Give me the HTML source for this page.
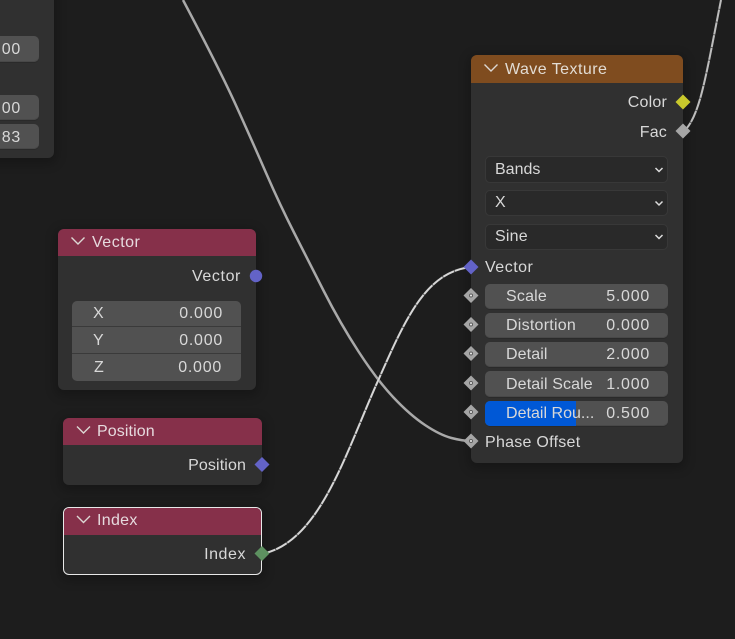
<!DOCTYPE html>
<html><head><meta charset="utf-8"><style>
html,body{margin:0;padding:0;background:#1d1d1d}
#c{position:relative;width:735px;height:639px;overflow:hidden;background:#1d1d1d;font-family:"Liberation Sans",sans-serif;font-size:16px;color:#d8d8d8;letter-spacing:.2px;filter:blur(.3px)}
.n{position:absolute;background:#303030;border-radius:6px;box-shadow:0 3px 10px 3px rgba(0,0,0,.22);box-sizing:border-box}
.h{position:absolute;left:0;top:0;right:0;border-radius:6px 6px 0 0}
.t{position:absolute;white-space:nowrap;line-height:20px;margin-top:2px}
.r{text-align:right}
.v{letter-spacing:.75px}
.f{position:absolute;box-sizing:border-box;border-radius:5px;background:#515151;box-shadow:inset 0 -1px 0 #484848,0 1px 0 #2a2a2a;overflow:hidden}
.d{position:absolute;box-sizing:border-box;border-radius:5px;background:#292929;border:1px solid #383838}
svg{position:absolute;left:0;top:0}
</style></head><body><div id="c">

<div class="n" style="left:-40px;top:-40px;width:94px;height:198px"></div>
<div class="f" style="left:-40px;top:36px;width:79px;height:26px"></div>
<div class="f" style="left:-40px;top:95px;width:79px;height:25px"></div>
<div class="f" style="left:-40px;top:124px;width:79px;height:25px"></div>
<div class="t v" style="left:0;top:38px;width:21px;text-align:right">00</div>
<div class="t v" style="left:0;top:97px;width:21px;text-align:right">00</div>
<div class="t v" style="left:0;top:126px;width:21px;text-align:right">83</div>

<svg width="735" height="639" style="z-index:1">
<path d="M183 0Q220 70 236.500 106.500Q253 143 266.500 174Q280 205 294 232.500Q308 260 324 291.500Q340 323 358.500 351.500Q377 380 393.500 397.500Q410 415 425 425Q440 435 451.500 438Q463 441 471 441" fill="none" stroke="#a9a9a9" stroke-width="2.500"/>
</svg>

<div class="n" style="left:471px;top:55px;width:212px;height:408px;z-index:2">
<div class="h" style="height:28px;background:#7f4c1f"></div></div>
<div style="position:absolute;left:0;top:0;z-index:3;width:735px;height:639px">
<div class="t" style="left:505px;top:58px;color:#e2dcd4;letter-spacing:.45px">Wave Texture</div>
<div class="t r" style="left:568px;width:99px;top:91px">Color</div>
<div class="t r" style="left:568px;width:99px;top:121px">Fac</div>

<div class="d" style="left:485px;top:156px;width:183px;height:27px"></div>
<div class="d" style="left:485px;top:190px;width:183px;height:26px"></div>
<div class="d" style="left:485px;top:224px;width:183px;height:26px"></div>
<div class="t" style="left:495px;top:158px;letter-spacing:0">Bands</div>
<div class="t" style="left:495px;top:191px">X</div>
<div class="t" style="left:495px;top:225px">Sine</div>

<div class="t" style="left:485px;top:256px;letter-spacing:.5px">Vector</div>

<div class="f" style="left:485px;top:284px;width:183px;height:25px"></div>
<div class="f" style="left:485px;top:313px;width:183px;height:25px"></div>
<div class="f" style="left:485px;top:342px;width:183px;height:25px"></div>
<div class="f" style="left:485px;top:371px;width:183px;height:26px"></div>
<div class="f" style="left:485px;top:401px;width:183px;height:25px"><div style="position:absolute;left:0;top:0;width:91px;height:25px;background:#0058d6"></div></div>

<div class="t" style="left:506px;top:285px">Scale</div><div class="t r v" style="left:590px;width:60px;top:285px">5.000</div>
<div class="t" style="left:506px;top:314px;letter-spacing:.25px">Distortion</div><div class="t r v" style="left:590px;width:60px;top:314px">0.000</div>
<div class="t" style="left:506px;top:343px;letter-spacing:.1px">Detail</div><div class="t r v" style="left:590px;width:60px;top:343px">2.000</div>
<div class="t" style="left:506px;top:373px;letter-spacing:.12px">Detail Scale</div><div class="t r v" style="left:590px;width:60px;top:373px">1.000</div>
<div class="t" style="left:506px;top:402px;letter-spacing:.02px">Detail Rou...</div><div class="t r v" style="left:590px;width:60px;top:402px">0.500</div>
<div class="t" style="left:485px;top:431px;letter-spacing:.27px">Phase Offset</div>
</div>

<div class="n" style="left:58px;top:229px;width:198px;height:161px;z-index:2">
<div class="h" style="height:27px;background:#86304a"></div></div>
<div style="position:absolute;left:0;top:0;z-index:3;width:735px;height:639px">
<div class="t" style="left:92px;top:231px;color:#e6dade;letter-spacing:.5px">Vector</div>
<div class="t r" style="left:141px;width:100px;top:265px;letter-spacing:.6px">Vector</div>
<div class="f" style="left:72px;top:301px;width:169px;height:80px;box-shadow:none"></div>
<div style="position:absolute;left:72px;top:326px;width:169px;height:1px;background:#3a3a3a"></div>
<div style="position:absolute;left:72px;top:353px;width:169px;height:1px;background:#3a3a3a"></div>
<div class="t" style="left:93px;top:302px">X</div><div class="t r v" style="left:163px;width:60px;top:302px">0.000</div>
<div class="t" style="left:93px;top:329px">Y</div><div class="t r v" style="left:163px;width:60px;top:329px">0.000</div>
<div class="t" style="left:94px;top:356px">Z</div><div class="t r v" style="left:162px;width:60px;top:356px">0.000</div>
</div>

<div class="n" style="left:63px;top:418px;width:199px;height:67px;z-index:2">
<div class="h" style="height:27px;background:#86304a"></div></div>
<div style="position:absolute;left:0;top:0;z-index:3;width:735px;height:639px">
<div class="t" style="left:97px;top:420px;color:#e6dade;letter-spacing:.1px">Position</div>
<div class="t r" style="left:126px;width:120px;top:454px;letter-spacing:.12px">Position</div>
</div>

<div class="n" style="left:63px;top:507px;width:199px;height:68px;z-index:2;border:1.5px solid #e8e8e8;overflow:hidden">
<div class="h" style="height:26.500px;background:#86304a;border-radius:0"></div></div>
<div style="position:absolute;left:0;top:0;z-index:3;width:735px;height:639px">
<div class="t" style="left:97px;top:509px;color:#e6dade;letter-spacing:.3px">Index</div>
<div class="t r" style="left:126px;width:120px;top:543px;letter-spacing:.55px">Index</div>
</div>

<svg width="735" height="639" style="z-index:4">
<g fill="none" stroke="#dcd8d4" stroke-width="1.400">
<path d="M484.500 64.500l6.500 6.500 6.500-6.500"/>
<path d="M71.500 237.500l6.500 6.500 6.500-6.500"/>
<path d="M77 426.500l6.500 6.500 6.500-6.500"/>
<path d="M77 516l6.500 6.500 6.500-6.500"/>
</g>
<g fill="none" stroke="#dcdcdc" stroke-width="1.500">
<path d="M655.500 168l3.500 3.500 3.500-3.500"/>
<path d="M655.500 201.500l3.500 3.500 3.500-3.500"/>
<path d="M655.500 235l3.500 3.500 3.500-3.500"/>
</g>

<!-- wires -->
<g fill="none">
<path d="M264 553.500C320 540 345 455 377 383C405 320 425 272 471 267" stroke="#5a5a5a" stroke-width="2.200"/>
<path d="M264 553.500C320 540 345 455 377 383C405 320 425 272 471 267" stroke="#d6d6d6" stroke-width="1.900" stroke-dasharray="12 1"/>
<path d="M683 132C700 118 706 75 721 0" stroke="#5a5a5a" stroke-width="2.200"/>
<path d="M683 132C700 118 706 75 721 0" stroke="#bdbdbd" stroke-width="1.900" stroke-dasharray="12 1"/>
</g>

<!-- sockets -->
<path d="M683 94.500l7.500 7.500-7.500 7.500-7.500-7.500z" fill="#c9c92c"/>
<path d="M683 123.500l7.500 7.500-7.500 7.500-7.500-7.500z" fill="#a5a5a5"/>
<path d="M471 259.500l7.500 7.500-7.500 7.500-7.500-7.500z" fill="#6363c7"/>
<g fill="#a5a5a5">
<path d="M471 288l7.500 7.500-7.500 7.500-7.500-7.500z"/>
<path d="M471 317l7.500 7.500-7.500 7.500-7.500-7.500z"/>
<path d="M471 346l7.500 7.500-7.500 7.500-7.500-7.500z"/>
<path d="M471 375.500l7.500 7.500-7.500 7.500-7.500-7.500z"/>
<path d="M471 404.500l7.500 7.500-7.500 7.500-7.500-7.500z"/>
<path d="M471 433.500l7.500 7.500-7.500 7.500-7.500-7.500z"/>
</g>
<g fill="#5c5c5c">
<circle cx="471" cy="295.500" r="2"/><circle cx="471" cy="324.500" r="2"/><circle cx="471" cy="353.500" r="2"/><circle cx="471" cy="383" r="2"/><circle cx="471" cy="412" r="2"/><circle cx="471" cy="441" r="2"/>
</g>
<g fill="#f0f0f0">
<circle cx="471" cy="295.500" r="1"/><circle cx="471" cy="324.500" r="1"/><circle cx="471" cy="353.500" r="1"/><circle cx="471" cy="383" r="1"/><circle cx="471" cy="412" r="1"/><circle cx="471" cy="441" r="1"/>
</g>
<circle cx="256" cy="276" r="6.200" fill="#6363c7"/>
<path d="M262 457l7.500 7.500-7.500 7.500-7.500-7.500z" fill="#6363c7"/>
<path d="M262 546l7.500 7.500-7.500 7.500-7.500-7.500z" fill="#5d9160"/>
</svg>
</div></body></html>
